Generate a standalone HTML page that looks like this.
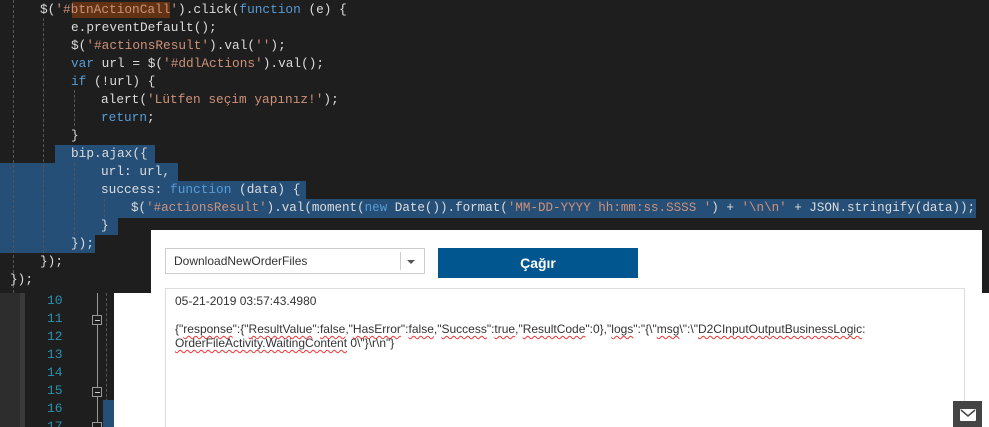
<!DOCTYPE html>
<html style="overflow:hidden"><head><meta charset="utf-8"><style>
html,body{margin:0;overflow:hidden}
body{width:989px;height:427px;background:#1e1e1e;position:relative;font-family:"Liberation Mono",monospace}
.l{position:absolute;left:0;height:18px;line-height:18px;font-size:13px;color:#dcdcdc;white-space:pre;transform:scaleX(0.983);transform-origin:0 0}
.k{color:#569cd6}.s{color:#ce9178}
.sel{position:absolute;background:#264f78}
.g{position:absolute;width:0;border-left:1px dashed #555}
.abs{position:absolute}
.n{position:absolute;left:47px;font-size:13px;color:#2b91af;height:18px;line-height:18px}
.fb{position:absolute;left:92px;width:8px;height:8px;border:1px solid #999;background:#1e1e1e}
.fb:after{content:"";position:absolute;left:2px;top:4px;width:5px;border-top:1px solid #ccc}
.ui{font-family:"Liberation Sans",Arial,sans-serif}
u{text-decoration:underline wavy #e33;text-decoration-thickness:1px;text-underline-offset:2px}
</style></head><body>
<div class="sel" style="left:55px;top:145px;width:100px;height:18px"></div>
<div class="sel" style="left:0;top:163px;width:178px;height:18px"></div>
<div class="sel" style="left:0;top:181px;width:306px;height:18px"></div>
<div class="sel" style="left:0;top:199px;width:976px;height:19px"></div>
<div class="sel" style="left:0;top:217px;width:118px;height:18px"></div>
<div class="sel" style="left:0;top:235px;width:95px;height:18px"></div>
<div class="g" style="left:13px;top:0;height:293px"></div>
<div class="g" style="left:43px;top:18px;height:240px"></div>
<div class="g" style="left:74px;top:90px;height:36px"></div>
<div class="g" style="left:74px;top:163px;height:72px"></div>
<div class="g" style="left:104px;top:199px;height:18px"></div>
<div class="abs" style="left:72px;top:2px;width:98px;height:16px;background:#613214"></div>
<div class="l" style="top:1px;left:40px">$(<span class="s">'#btnActionCall'</span>).click(<span class="k">function</span> (e) {</div>
<div class="l" style="top:19px;left:71px">e.preventDefault();</div>
<div class="l" style="top:37px;left:71px">$(<span class="s">'#actionsResult'</span>).val(<span class="s">''</span>);</div>
<div class="l" style="top:55px;left:71px"><span class="k">var</span> url = $(<span class="s">'#ddlActions'</span>).val();</div>
<div class="l" style="top:73px;left:71px"><span class="k">if</span> (!url) {</div>
<div class="l" style="top:91px;left:101px">alert(<span class="s">'Lütfen seçim yapınız!'</span>);</div>
<div class="l" style="top:109px;left:101px"><span class="k">return</span>;</div>
<div class="l" style="top:127px;left:71px">}</div>
<div class="l" style="top:145px;left:71px">bip.ajax({</div>
<div class="l" style="top:163px;left:101px">url: url,</div>
<div class="l" style="top:181px;left:101px">success: <span class="k">function</span> (data) {</div>
<div class="l" style="top:199px;left:131px;transform:scaleX(0.966)">$(<span class="s">'#actionsResult'</span>).val(moment(<span class="k">new</span> Date()).format(<span class="s">'MM-DD-YYYY hh:mm:ss.SSSS '</span>) + <span class="s">'\n\n'</span> + JSON.stringify(data));</div>
<div class="l" style="top:217px;left:101px">}</div>
<div class="l" style="top:235px;left:71px">});</div>
<div class="l" style="top:253px;left:40px">});</div>
<div class="l" style="top:271px;left:10px">});</div>
<div class="abs" style="left:0;top:293px;width:20px;height:134px;background:#2d2d2d"></div>
<div class="abs" style="left:20px;top:293px;width:5px;height:134px;background:#3a3a3a"></div>
<div class="abs" style="left:97px;top:293px;width:1px;height:134px;background:#999"></div>
<div class="g" style="left:106px;top:293px;height:134px"></div>
<div class="sel" style="left:103px;top:400px;width:11px;height:27px"></div>
<div class="n" style="top:292px">10</div><div class="n" style="top:310px">11</div><div class="n" style="top:328px">12</div><div class="n" style="top:346px">13</div><div class="n" style="top:364px">14</div><div class="n" style="top:382px">15</div><div class="n" style="top:400px">16</div><div class="n" style="top:418px">17</div>
<div class="fb" style="top:315px"></div><div class="fb" style="top:387px"></div><div class="fb" style="top:422px"></div>
<div class="abs" style="left:151px;top:230px;width:831px;height:197px;background:#fff"></div>
<div class="abs" style="left:114px;top:293px;width:875px;height:134px;background:#fff"></div>
<div class="abs ui" style="left:165px;top:248px;width:258px;height:24px;border:1px solid #ccc;font-size:12px;color:#333;line-height:24px"><span style="margin-left:8px">DownloadNewOrderFiles</span>
<div class="abs" style="left:234px;top:3px;width:1px;height:18px;background:#ccc"></div>
<div class="abs" style="left:241px;top:11px;border-left:4px solid transparent;border-right:4px solid transparent;border-top:4px solid #555"></div></div>
<div class="abs ui" style="left:438px;top:248px;width:200px;height:30px;background:#01568f;color:#fff;font-weight:bold;font-size:14px;line-height:30px;text-align:center">Çağır</div>
<div class="abs ui" style="left:165px;top:288px;width:798px;height:139px;border:1px solid #ddd;border-bottom:none;font-size:12px;color:#333">
<div class="abs" style="left:9px;top:5px">05-21-2019 03:57:43.4980</div>
<div class="abs" style="left:9px;top:33px;width:780px;line-height:14px">{"<u>response</u>":{"<u>ResultValue</u>":<u>false</u>,"<u>HasError</u>":<u>false</u>,"<u>Success</u>":<u>true</u>,"<u>ResultCode</u>":0},"<u>logs</u>":"{\"<u>msg</u>\":\"<u>D2CInputOutputBusinessLogic</u>:<br><u>OrderFileActivity.WaitingContent</u> 0\"}\r\n"}</div>
</div>
<div class="abs" style="left:953px;top:401px;width:29px;height:26px;background:#444"></div>
<svg class="abs" style="left:960px;top:409px" width="16" height="12"><rect x="0" y="0" width="16" height="12" rx="1" fill="#fff"/><path d="M1 1 L8 7 L15 1" stroke="#444" stroke-width="1.5" fill="none"/></svg>
</body></html>
